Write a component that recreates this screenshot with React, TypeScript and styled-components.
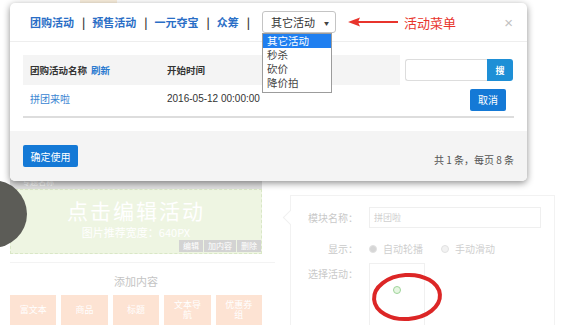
import styled, { createGlobalStyle } from "styled-components";

const GlobalStyle = createGlobalStyle`
  html, body {
    margin: 0;
    padding: 0;
    background: #fff;
  }
  body {
    font-family: "Noto Sans CJK SC", "Liberation Sans", sans-serif;
  }
`;

const Page = styled.div`
  position: relative;
  width: 585px;
  height: 325px;
  overflow: hidden;
  display: flex;
  background: #fff;
`;

/* ---------- faded page behind the dialog ---------- */

const LeftCol = styled.div`
  width: 252px;
  margin-left: 10px;
  display: flex;
  flex-direction: column;
  flex-shrink: 0;
`;

const TopArea = styled.div`
  height: 181px;
  display: flex;
  padding-left: 70px;
`;

const PaleTab = styled.div`
  width: 37px;
  height: 4px;
  background: #fbf0de;
`;

const TitleStrip = styled.div`
  height: 14px;
  background: #e0e0e0;
  color: #fff;
  font-size: 8px;
  line-height: 14px;
  padding-left: 12px;
`;

const Banner = styled.div`
  height: 65px;
  box-sizing: border-box;
  background: #eef5e2;
  border: 1px dashed #d9e7c6;
  display: flex;
  flex-direction: column;
  align-items: center;
  color: #fff;
`;

const BannerTitle = styled.div`
  font-size: 21px;
  letter-spacing: 2px;
  margin-top: 6px;
  line-height: 28px;
`;

const BannerSub = styled.div`
  font-size: 11px;
  line-height: 16px;
`;

const BannerTools = styled.div`
  align-self: flex-end;
  margin-top: auto;
  margin-bottom: 1px;
  display: flex;
  gap: 1px;
`;

const Tool = styled.span`
  background: #d3d3d3;
  color: #fff;
  font-size: 8px;
  line-height: 12px;
  padding: 0 4px;
`;

const Spacer = styled.div`
  height: 8px;
  border-bottom: 1px solid #f3f3f3;
  margin-right: -13px;
`;

const AddTitle = styled.div`
  text-align: center;
  color: #c4c4c4;
  font-size: 11px;
  line-height: 14px;
  padding: 11px 0 7px;
`;

const AddGrid = styled.div`
  display: grid;
  grid-template-columns: repeat(5, 1fr);
  gap: 5px;
`;

const AddBtn = styled.div`
  height: 30px;
  background: #fde3d3;
  color: #fff;
  font-size: 9px;
  line-height: 10px;
  display: flex;
  align-items: center;
  justify-content: center;
  text-align: center;
  padding: 0 9px;
  overflow-wrap: anywhere;
`;

const RightPanel = styled.div`
  position: relative;
  margin: 195px 0 0 28px;
  width: 265px;
  border: 1px solid #f2f2f2;
  border-bottom: none;
  padding: 11px 13px 0 0;
  box-sizing: border-box;
  display: grid;
  grid-template-columns: 67px 1fr;
  column-gap: 11px;
  align-content: start;

  &::before {
    content: "";
    position: absolute;
    left: -6px;
    top: 16px;
    width: 10px;
    height: 10px;
    border-left: 1px solid #f0f0f0;
    border-bottom: 1px solid #f0f0f0;
    background: #fff;
    transform: rotate(45deg);
  }
`;

const FieldLabel = styled.div<{ $top: number }>`
  text-align: right;
  color: #c9c9c9;
  font-size: 10px;
  line-height: 21px;
  margin-top: ${(p) => p.$top}px;
`;

const FieldInput = styled.div`
  height: 21px;
  border: 1px solid #efefef;
  box-sizing: border-box;
  color: #d0d0d0;
  font-size: 9px;
  line-height: 19px;
  padding-left: 4px;
`;

const Radios = styled.div`
  margin-top: 10px;
  display: flex;
  align-items: center;
  gap: 6px;
  color: #cfcfcf;
  font-size: 10px;
  line-height: 21px;
`;

const Radio = styled.span<{ $on?: boolean }>`
  width: 6px;
  height: 6px;
  border-radius: 50%;
  border: 1px solid #e2e2e2;
  background: ${(p) => (p.$on ? "#d6d6d6" : "#f2f2f2")};
  margin-left: ${(p) => (p.$on ? "0" : "12px")};
`;

const PickBox = styled.div`
  margin-top: 4px;
  width: 56px;
  height: 70px;
  border: 1px solid #f0f0f0;
  border-bottom: none;
  display: flex;
  justify-content: center;
  padding-top: 22px;
  box-sizing: border-box;
`;

const PlusDot = styled.div`
  width: 6px;
  height: 6px;
  border-radius: 50%;
  border: 1px solid #9fd49a;
  background: #e6f6e2;
`;

/* ---------- overlays ---------- */

const Spot = styled.div`
  position: absolute;
  left: -43px;
  top: 180px;
  width: 70px;
  height: 68px;
  border-radius: 50%;
  background: #5c5c57;
`;

const Ring = styled.svg`
  position: absolute;
  left: 368px;
  top: 270px;
`;

/* ---------- dialog ---------- */

const Modal = styled.div`
  position: absolute;
  left: 10px;
  top: 3px;
  width: 517px;
  height: 178px;
  background: #fff;
  border-radius: 5px;
  box-shadow: 0 2px 7px rgba(0, 0, 0, 0.45);
  display: flex;
  flex-direction: column;
`;

const Header = styled.div`
  height: 39px;
  flex-shrink: 0;
  border-bottom: 1px solid #eee;
  box-sizing: border-box;
  display: flex;
  align-items: center;
  padding: 0 14px 0 20px;
`;

const Tab = styled.span`
  color: #2a6ec6;
  font-weight: bold;
  font-size: 11px;
`;

const Sep = styled.span`
  color: #333;
  font-weight: bold;
  font-size: 11px;
  margin: 0 7px 0 8px;
`;

const Select = styled.div`
  position: relative;
  margin-left: 5px;
  width: 74px;
  height: 22px;
  box-sizing: border-box;
  border: 1px solid #c4c4c4;
  border-radius: 3px;
  display: flex;
  align-items: center;
  justify-content: space-between;
  padding: 0 6px 0 8px;
  color: #333;
  font-size: 11px;
`;

const Caret = styled.span`
  font-size: 5px;
  color: #444;
`;

const Menu = styled.ul`
  position: absolute;
  left: -1px;
  top: 21px;
  width: 70px;
  margin: 0;
  padding: 0 0 2px;
  list-style: none;
  background: #fff;
  border: 1px solid #9c9c9c;
  box-sizing: border-box;
  z-index: 2;
`;

const MenuItem = styled.li<{ $active?: boolean }>`
  height: 14px;
  line-height: 14px;
  font-size: 10.5px;
  padding-left: 4px;
  overflow: hidden;
  color: ${(p) => (p.$active ? "#fff" : "#444")};
  background: ${(p) => (p.$active ? "#1f7ff0" : "transparent")};
`;

const Note = styled.div`
  display: flex;
  align-items: center;
  margin-left: 12px;
  gap: 6px;
`;

const NoteText = styled.span`
  color: #e8342c;
  font-size: 13px;
`;

const Close = styled.span`
  margin-left: auto;
  color: #c2c2c2;
  font-size: 15px;
  font-family: "Liberation Sans", sans-serif;
`;

const Body = styled.div`
  padding: 13px 13px 0;
`;

const Table = styled.div`
  display: grid;
  grid-template-columns: 137px 240px 1fr;
  border-bottom: 2px solid #ddd;
`;

const HeadCell = styled.div<{ $gray?: boolean }>`
  height: 30px;
  display: flex;
  align-items: center;
  padding-left: 7px;
  background: ${(p) => (p.$gray ? "#f4f4f4" : "transparent")};
  font-size: 9.5px;
  font-weight: bold;
  color: #333;
`;

const Refresh = styled.span`
  color: #2a7ad0;
  margin-left: 4px;
`;

const SearchCell = styled.div`
  display: flex;
  justify-content: flex-end;
  align-items: center;
  padding-right: 1px;
`;

const SearchInput = styled.div`
  width: 82px;
  height: 22px;
  box-sizing: border-box;
  border: 1px solid #ddd;
  border-right: none;
  border-radius: 3px 0 0 3px;
`;

const SearchBtn = styled.div`
  width: 26px;
  height: 22px;
  background: #1e8fd6;
  border-radius: 0 3px 3px 0;
  color: #fff;
  font-size: 9px;
  font-weight: bold;
  display: flex;
  align-items: center;
  justify-content: center;
`;

const Cell = styled.div<{ $link?: boolean }>`
  height: 31px;
  display: flex;
  align-items: center;
  padding-left: 7px;
  padding-bottom: 5px;
  box-sizing: border-box;
  font-size: 10px;
  color: ${(p) => (p.$link ? "#3a85d2" : "#333")};
  font-family: "Liberation Sans", "Noto Sans CJK SC", sans-serif;
`;

const ActionCell = styled.div`
  display: flex;
  justify-content: flex-end;
  align-items: center;
  padding: 0 8px 2px 0;
`;

const BlueBtn = styled.div<{ $w: number }>`
  width: ${(p) => p.$w}px;
  height: 22px;
  background: #1479d6;
  border-radius: 2px;
  color: #fff;
  font-size: 10px;
  display: flex;
  align-items: center;
  justify-content: center;
`;

const Footer = styled.div`
  margin-top: auto;
  height: 50px;
  background: #f4f4f4;
  border-radius: 0 0 5px 5px;
  display: flex;
  justify-content: space-between;
  align-items: center;
  padding: 0 13px;
`;

const Count = styled.span`
  color: #555;
  font-size: 10px;
  margin-top: 6px;
`;

export default function App() {
  return (
    <Page>
      <GlobalStyle />

      <LeftCol>
        <TopArea>
          <PaleTab />
        </TopArea>
        <TitleStrip>专题名称</TitleStrip>
        <Banner>
          <BannerTitle>点击编辑活动</BannerTitle>
          <BannerSub>图片推荐宽度：640PX</BannerSub>
          <BannerTools>
            <Tool>编辑</Tool>
            <Tool>加内容</Tool>
            <Tool>删除</Tool>
          </BannerTools>
        </Banner>
        <Spacer />
        <AddTitle>添加内容</AddTitle>
        <AddGrid>
          <AddBtn>富文本</AddBtn>
          <AddBtn>商品</AddBtn>
          <AddBtn>标题</AddBtn>
          <AddBtn>文本导航</AddBtn>
          <AddBtn>优惠券组</AddBtn>
        </AddGrid>
      </LeftCol>

      <RightPanel>
        <FieldLabel $top={0}>模块名称：</FieldLabel>
        <FieldInput>拼团啦</FieldInput>
        <FieldLabel $top={10}>显示：</FieldLabel>
        <Radios>
          <Radio $on />
          <span>自动轮播</span>
          <Radio />
          <span>手动滑动</span>
        </Radios>
        <FieldLabel $top={4}>选择活动：</FieldLabel>
        <PickBox>
          <PlusDot />
        </PickBox>
      </RightPanel>

      <Spot />

      <Ring width="80" height="56" viewBox="0 0 80 56">
        <ellipse cx="39" cy="27" rx="33" ry="22" fill="none" stroke="#dc2626" strokeWidth="4" transform="rotate(-4 39 27)" />
      </Ring>

      <Modal>
        <Header>
          <Tab>团购活动</Tab>
          <Sep>|</Sep>
          <Tab>预售活动</Tab>
          <Sep>|</Sep>
          <Tab>一元夺宝</Tab>
          <Sep>|</Sep>
          <Tab>众筹</Tab>
          <Sep>|</Sep>
          <Select>
            <span>其它活动</span>
            <Caret>▼</Caret>
            <Menu>
              <MenuItem $active>其它活动</MenuItem>
              <MenuItem>秒杀</MenuItem>
              <MenuItem>砍价</MenuItem>
              <MenuItem>降价拍</MenuItem>
            </Menu>
          </Select>
          <Note>
            <svg width="50" height="10" viewBox="0 0 50 10">
              <path d="M10 5 L50 5" stroke="#e8342c" strokeWidth="2" />
              <path d="M0 5 L12 0.5 L10 5 L12 9.5 Z" fill="#e8342c" />
            </svg>
            <NoteText>活动菜单</NoteText>
          </Note>
          <Close>×</Close>
        </Header>

        <Body>
          <Table>
            <HeadCell $gray>
              团购活动名称<Refresh>刷新</Refresh>
            </HeadCell>
            <HeadCell $gray>开始时间</HeadCell>
            <SearchCell>
              <SearchInput />
              <SearchBtn>搜</SearchBtn>
            </SearchCell>
            <Cell $link>拼团来啦</Cell>
            <Cell>2016-05-12 00:00:00</Cell>
            <ActionCell>
              <BlueBtn $w={36}>取消</BlueBtn>
            </ActionCell>
          </Table>
        </Body>

        <Footer>
          <BlueBtn $w={55}>确定使用</BlueBtn>
          <Count>共 1 条，每页 8 条</Count>
        </Footer>
      </Modal>
    </Page>
  );
}
